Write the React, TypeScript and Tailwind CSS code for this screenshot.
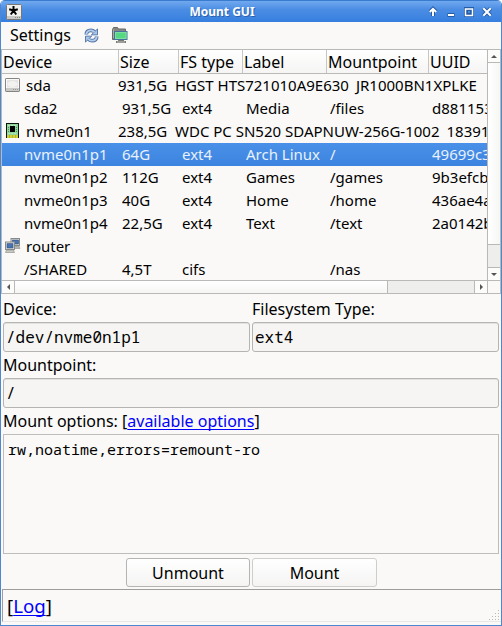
import type { ReactNode } from "react";

function RefreshIcon() {
  return (
    <svg width="15" height="15" viewBox="0 0 16 16" fill="none">
      <path d="M2.500 7C2.500 4 4.500 2.500 7.300 2.500c1.700 0 2.900.5 3.900 1.500" stroke="#5276a9" strokeWidth="4" />
      <path d="M14.400 1v6.300H7.800z" fill="#a8c4e6" stroke="#5276a9" />
      <path d="M2.500 6.500C2.900 3.900 4.800 2.500 7.300 2.500c1.700 0 2.900.7 4 2" stroke="#b4cce9" strokeWidth="2" />
      <path d="M13.500 9c0 3-2 4.500-4.800 4.500-1.700 0-2.900-.5-3.900-1.500" stroke="#5276a9" strokeWidth="4" />
      <path d="M1.600 15V8.700h6.600z" fill="#a8c4e6" stroke="#5276a9" />
      <path d="M13.500 9.500c-.4 2.600-2.300 4-4.800 4-1.700 0-2.900-.7-4-2" stroke="#b4cce9" strokeWidth="2" />
    </svg>
  );
}

function NetFolderIcon() {
  return (
    <svg width="16" height="16" viewBox="0 0 16 16">
      <path d="M.5 12.500v-10l1-2h4l1 1.500h7v10.500z" fill="#858783" stroke="#686a67" />
      <path d="M1.500 11V2.500" stroke="#aaa" />
      <rect x="2.500" y="4.500" width="12.500" height="8" fill="#55d783" stroke="#476f9f" />
      <rect x="3.500" y="5.500" width="10.500" height="6" fill="none" stroke="#7ce19d" />
      <path d="M6 13h6v1h2v2H4v-2h2z" fill="#777975" />
      <path d="M5 15h8" stroke="#d5d6d2" strokeWidth=".8" />
    </svg>
  );
}

function DriveIcon() {
  return (
    <svg width="15" height="14" viewBox="0 0 15 14">
      <rect x=".5" y=".5" width="14" height="13" rx=".6" fill="#eeeeed" stroke="#858583" />
      <rect x="1.500" y="1.500" width="12" height="8.500" fill="#e4e4e3" stroke="#fafafa" />
      <ellipse cx="7.500" cy="6" rx="5" ry="3" fill="#f2f2f1" />
      <rect x="1" y="10" width="13" height="3" fill="#c9c9c7" />
      <path d="M8 11.500h5" stroke="#989896" strokeDasharray="1 1" />
    </svg>
  );
}

function ChipIcon() {
  return (
    <svg width="14" height="15" viewBox="0 0 14 15" shapeRendering="crispEdges" className="ml-px">
      <path d="M0 0h13v15H0z" fill="#0c160e" />
      <rect x="1" y="1" width="11" height="11" fill="#8fd69b" />
      <path d="M2 2.500h9M2 10.500h9" stroke="#b5e8bb" strokeDasharray="2 1" />
      <rect x="4" y="3" width="5" height="6" fill="#000" />
      <path d="M2.500 4v6M10.500 4v6" stroke="#4c8d58" strokeDasharray="1 1" />
      <rect x="1" y="12" width="11" height="3" fill="#d0d23b" />
      <path d="M3.500 12v3M6.500 12v3M9.500 12v3" stroke="#b2b529" />
    </svg>
  );
}

function NetworkIcon() {
  return (
    <svg width="16" height="15" viewBox="0 0 16 15">
      <rect x="6" y=".5" width="8.500" height="7" fill="#e4e5e2" stroke="#888a85" />
      <rect x="7.500" y="2" width="6" height="4" fill="#4773b2" stroke="#304f80" strokeWidth=".6" />
      <path d="M9 8h5l1 2.500H9z" fill="#b4b6b1" stroke="#888a85" strokeWidth=".6" />
      <rect x=".5" y="4" width="9" height="7.500" fill="#e4e5e2" stroke="#888a85" />
      <rect x="2" y="5.700" width="6" height="4.300" fill="#4773b2" stroke="#304f80" strokeWidth=".6" />
      <path d="M1.500 12h7l1 2.500h-9z" fill="#c8cac5" stroke="#888a85" strokeWidth=".6" />
    </svg>
  );
}

function AppIcon() {
  return (
    <svg width="16" height="16" viewBox="0 0 16 16">
      <rect x=".5" y=".5" width="15" height="15" rx="1" fill="#efefee" stroke="#777875" />
      <rect x="1" y="12" width="14" height="3" fill="#c7c7c5" />
      <path d="M9 13.500h5" stroke="#888" strokeDasharray="1 1" />
      <path d="M7.500 6.500V2M7.500 6.500l4.300-1.300M7.500 6.500l2.700 4M7.500 6.500l-2.700 4M7.500 6.500L3.200 5.200" stroke="#000" strokeWidth="2" />
    </svg>
  );
}

function WindowButtons() {
  return (
    <svg width="66" height="15" viewBox="0 0 66 15" fill="none" className="shrink-0">
      <g stroke="#265ca5" strokeWidth="4">
        <path d="M4 12V5M.800 8L4 4.800 7.200 8" />
        <path d="M18.500 11h7" />
        <path d="M37 5h6v6h-6z" />
        <path d="M54.300 4.300l7.400 7.400M61.700 4.300l-7.400 7.400" />
      </g>
      <g stroke="#fff" strokeWidth="2">
        <path d="M4 12V5M.800 8L4 4.800 7.200 8" />
        <path d="M19 11h6" />
        <path d="M36.500 5h7v6.500h-7z" strokeWidth="1.500" />
        <path d="M54.300 4.300l7.400 7.400M61.700 4.300l-7.400 7.400" />
      </g>
    </svg>
  );
}

const columns = [
  { label: "Device", width: "w-[117px]" },
  { label: "Size", width: "w-[60px]" },
  { label: "FS type", width: "w-[64px]" },
  { label: "Label", width: "w-[84px]" },
  { label: "Mountpoint", width: "w-[102px]" },
  { label: "UUID", width: "w-[80px]" },
];

function DiskRow({ icon, name, size, model, serial }: { icon: ReactNode; name: string; size?: string; model?: string; serial?: string }) {
  return (
    <div className="flex h-[23px] items-center whitespace-nowrap pb-[2px]">
      <span className="flex w-[24px] shrink-0 pl-[3px]">{icon}</span>
      <span className="w-[92px] shrink-0">{name}</span>
      <span className="w-[57px] shrink-0">{size}</span>
      <span>{model}</span>
      <span className="pl-[7px]">{serial}</span>
    </div>
  );
}

function PartRow({ cells, selected }: { cells: string[]; selected?: boolean }) {
  return (
    <div
      className={
        selected
          ? "flex h-[23px] items-center whitespace-nowrap bg-linear-to-b from-[#4a90e8] to-[#3b84df] pb-[2px] pl-[22px] text-[#e8f1fc]"
          : "flex h-[23px] items-center whitespace-nowrap pb-[2px] pl-[22px]"
      }
    >
      <span className="w-[98px] shrink-0">{cells[0]}</span>
      <span className="w-[60px] shrink-0">{cells[1]}</span>
      <span className="w-[64px] shrink-0">{cells[2]}</span>
      <span className="w-[84px] shrink-0">{cells[3]}</span>
      <span className="w-[102px] shrink-0">{cells[4]}</span>
      <span className="shrink-0">{cells[5]}</span>
    </div>
  );
}

function DeviceTable() {
  return (
    <div className="flex h-[245px] flex-col border-y border-l border-[#b9b9b8]">
      <div className="flex h-[230px]">
        <div className="w-[485px] overflow-hidden text-[15px]">
          <div className="flex h-6 border-b border-[#b9b9b8] bg-linear-to-b from-white to-[#f6f5f4] text-[16px] leading-[24px]">
            {columns.map((c) => (
              <div key={c.label} className={`${c.width} shrink-0 border-r border-[#c6c6c5] pl-px`}>
                {c.label}
              </div>
            ))}
          </div>
          <DiskRow icon={<DriveIcon />} name="sda" size="931,5G" model="HGST HTS721010A9E630" serial="JR1000BN1XPLKE" />
          <PartRow cells={["sda2", "931,5G", "ext4", "Media", "/files", "d881153"]} />
          <DiskRow icon={<ChipIcon />} name="nvme0n1" size="238,5G" model="WDC PC SN520 SDAPNUW-256G-1002" serial="18391" />
          <PartRow selected cells={["nvme0n1p1", "64G", "ext4", "Arch Linux", "/", "49699c3"]} />
          <PartRow cells={["nvme0n1p2", "112G", "ext4", "Games", "/games", "9b3efcb"]} />
          <PartRow cells={["nvme0n1p3", "40G", "ext4", "Home", "/home", "436ae4a"]} />
          <PartRow cells={["nvme0n1p4", "22,5G", "ext4", "Text", "/text", "2a0142b"]} />
          <DiskRow icon={<NetworkIcon />} name="router" />
          <PartRow cells={["/SHARED", "4,5T", "cifs", "", "/nas", ""]} />
        </div>
        <div className="flex w-[14px] flex-col border-x border-[#b9b9b8] bg-[#eeeeec]">
          <div className="flex h-[13px] items-center justify-center border-b border-[#b9b9b8] bg-[#fcfcfb]">
            <svg width="6" height="3"><path d="M0 3L3 0l3 3z" fill="#555" /></svg>
          </div>
          <div className="h-[182px] border-b border-[#b9b9b8] bg-linear-to-r from-white to-[#f6f6f5]" />
          <div className="h-[22px]" />
          <div className="flex h-[13px] items-center justify-center border-t border-[#b9b9b8] bg-[#fcfcfb]">
            <svg width="6" height="3"><path d="M0 0l3 3 3-3z" fill="#555" /></svg>
          </div>
        </div>
      </div>
      <div className="flex h-[14px] border-t border-[#b9b9b8] bg-[#eeeeec]">
        <div className="flex w-[13px] items-center justify-center border-r border-[#b9b9b8] bg-[#fcfcfb]">
          <svg width="3" height="6"><path d="M3 0L0 3l3 3z" fill="#555" /></svg>
        </div>
        <div className="w-[373px] border-r border-[#b9b9b8] bg-linear-to-b from-white to-[#f6f6f5]" />
        <div className="w-[86px]" />
        <div className="flex w-[13px] items-center justify-center border-l border-[#b9b9b8] bg-[#fcfcfb]">
          <svg width="3" height="6"><path d="M0 0l3 3-3 3z" fill="#555" /></svg>
        </div>
        <div className="w-[14px] border-x border-[#b9b9b8] bg-[#faf9f8]" />
      </div>
    </div>
  );
}

function Field({ value, width }: { value: string; width: string }) {
  return (
    <div className={`${width} h-[30px] rounded-[3px] border border-[#b4b4b3] bg-[#f6f5f4] pl-[2px] font-['Noto_Sans_Mono','DejaVu_Sans_Mono',monospace] text-[16px] leading-[28px] shadow-[inset_0_1px_0_#e3e2e1]`}>
      {value}
    </div>
  );
}

function ResizeGrip() {
  return (
    <svg width="11" height="11" fill="#b8b8b7" shapeRendering="crispEdges">
      {[0, 1, 2, 3].map((r) =>
        Array.from({ length: r + 1 }, (_, c) => <rect key={`${r}-${c}`} x={10 - c * 3} y={r * 3} width="1" height="1" />)
      )}
    </svg>
  );
}

export default function App() {
  return (
    <div className="h-[626px] w-[502px] bg-white font-['Noto_Sans',sans-serif] text-[16px] leading-[22px] text-black">
      <div className="flex h-full flex-col overflow-hidden rounded-t-[5px] border-x border-b border-[#4d87d0] bg-[#faf9f8]">
        <div className="flex h-[22px] items-center border-t border-[#397bce] bg-linear-to-b from-[#71a9ef] via-[#4b8de3] via-40% to-[#367fdf] pl-[5px] pr-[6px]">
          <AppIcon />
          <div className="flex-1 pr-[7px] pt-px text-center text-[12px] font-bold text-white [text-shadow:1px_1px_0_#2a62ad]">Mount GUI</div>
          <WindowButtons />
        </div>
        <div className="flex h-[27px] items-center pb-px pl-[9px]">
          <span className="w-[74px]">Settings</span>
          <span className="w-[28px]"><RefreshIcon /></span>
          <NetFolderIcon />
        </div>
        <DeviceTable />
        <div className="flex flex-col pl-[2px]">
          <div className="flex h-[28px] items-center pt-px">
            <span className="w-[249px]">Device:</span>
            <span>Filesystem Type:</span>
          </div>
          <div className="flex gap-[2px]">
            <Field value="/dev/nvme0n1p1" width="w-[247px]" />
            <Field value="ext4" width="w-[247px]" />
          </div>
          <div className="h-[26px] pt-[2px]">Mountpoint:</div>
          <Field value="/" width="w-[496px]" />
          <div className="h-[26px] pt-[2px]">
            Mount options: [<a className="text-[#0000ff] underline underline-offset-[2px] [text-decoration-skip-ink:none]">available options</a>]
          </div>
          <div className="h-[120px] w-[496px] border border-[#bdbdbc] bg-[#faf9f8] pl-[4px] pt-[3px] font-['Noto_Sans_Mono','DejaVu_Sans_Mono',monospace] text-[15px]">
            rw,noatime,errors=remount-ro
          </div>
          <div className="flex h-[35px] gap-[2px] pl-[123px] pt-[4px] text-center leading-[28px]">
            <div className="h-[29px] w-[124px] rounded-[3px] border border-[#b4b4b3] bg-linear-to-b from-white to-[#f5f4f3]">Unmount</div>
            <div className="h-[29px] w-[125px] rounded-[3px] border border-[#cececd] bg-linear-to-b from-white to-[#f5f4f3]">Mount</div>
          </div>
        </div>
        <div className="ml-px flex h-[33px] items-end justify-between border-l border-t border-b border-[#9e9d9c] border-b-[#e9e8e7] pl-[4px]">
          <span className="self-center text-[18.7px] leading-[30px]">
            [<a className="text-[#0000ff] underline underline-offset-[2px] [text-decoration-skip-ink:none]">Log</a>]
          </span>
          <span className="pr-[2px]"><ResizeGrip /></span>
        </div>
      </div>
    </div>
  );
}
